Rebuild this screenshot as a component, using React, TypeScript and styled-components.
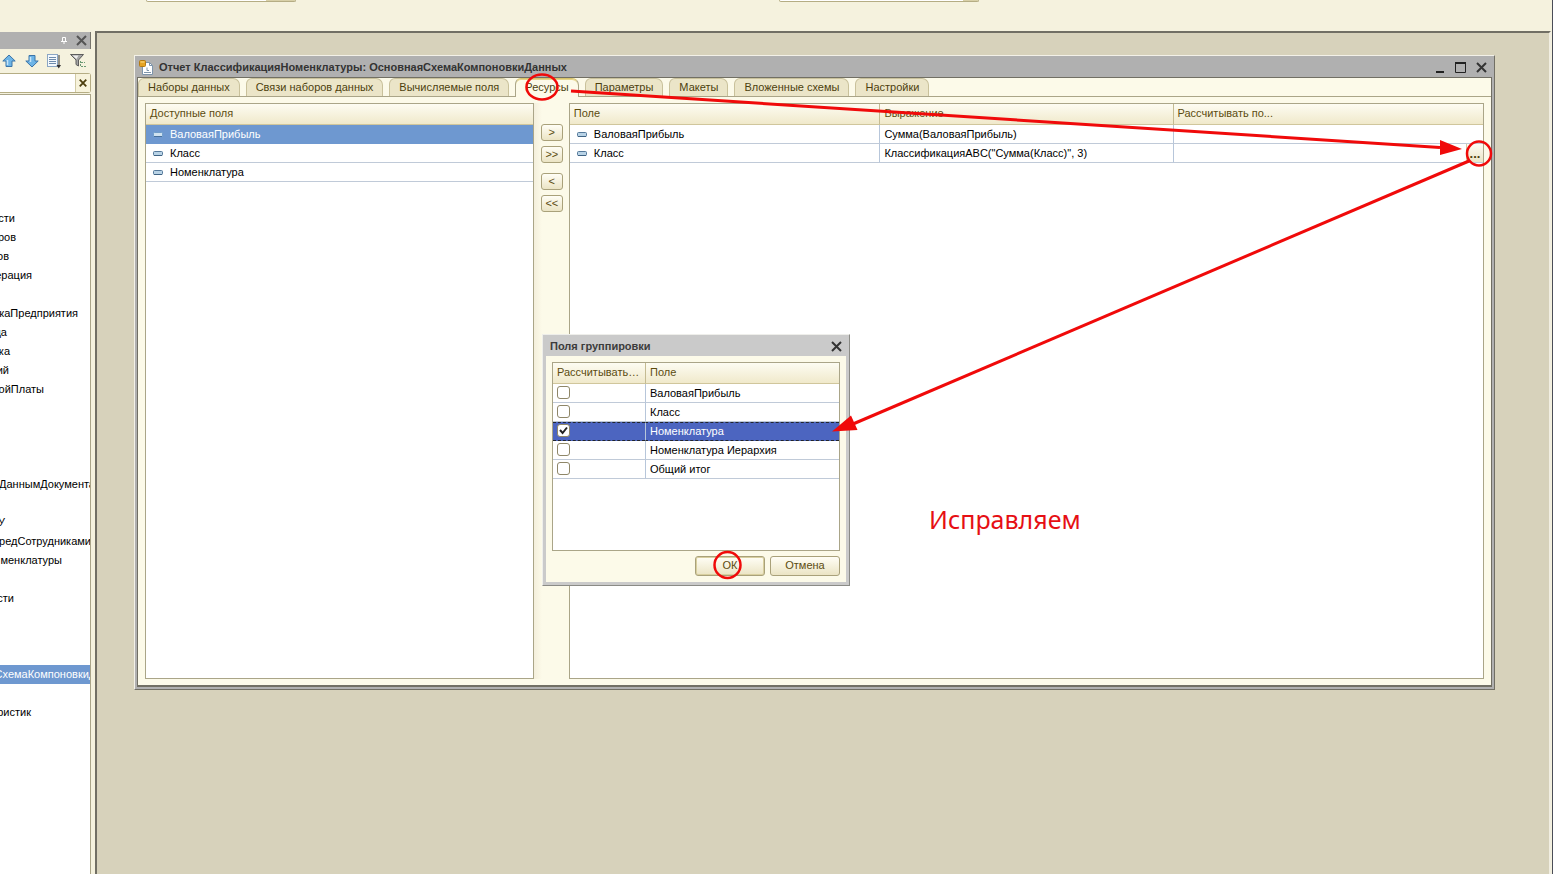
import React from "react";
import styled, { createGlobalStyle, css } from "styled-components";

const Global = createGlobalStyle`
  * { box-sizing: border-box; }
  html, body, #root { height: 100%; }
  body {
    margin: 0;
    overflow: hidden;
    background: #f5f2de;
    font: 11px/13px "Liberation Sans", Arial, sans-serif;
    color: #000;
  }
  button, input { font: inherit; margin: 0; }
`;

const Shell = styled.div`
  position: relative;
  height: 100%;
  display: flex;
  flex-direction: column;
  border-right: 1px solid #4a4d58;
`;

const TopBar = styled.header`
  flex: none;
  height: 31px;
  display: flex;
  align-items: flex-start;
  padding-left: 146px;
  gap: 483px;
  background: #f5f2de;
`;

const ComboEdge = styled.div<{ $width: number; $button: number }>`
  display: flex;
  justify-content: flex-end;
  width: ${(p) => p.$width}px;
  height: 2px;
  background: #fff;
  border: 1px solid #b5ad84;
  border-top: 0;
  border-radius: 0 0 3px 3px;
  &::after {
    content: "";
    width: ${(p) => p.$button}px;
    background: #d8d0a8;
  }
`;

const Body = styled.div`
  flex: 1;
  min-height: 0;
  display: flex;
  gap: 4px;
  padding-right: 1px;
`;

const Side = styled.aside`
  flex: none;
  width: 91px;
  padding-top: 1px;
  display: flex;
  flex-direction: column;
`;

const SideTitle = styled.div`
  flex: none;
  height: 17px;
  display: flex;
  align-items: center;
  justify-content: flex-end;
  gap: 9px;
  padding-right: 3px;
  background: #b0b0b0;
  border-right: 1px solid #77756c;
`;

const IconButton = styled.button`
  display: flex;
  align-items: center;
  justify-content: center;
  padding: 0;
  border: 0;
  background: none;
  color: #333;
  svg { display: block; }
`;

const SideTools = styled.div`
  flex: none;
  height: 24px;
  display: flex;
  align-items: center;
  justify-content: space-between;
  padding: 0 4px 0 2px;
`;

const SearchRow = styled.div`
  flex: none;
  height: 20px;
  display: flex;
  border: 1px solid #b5ad84;
  border-left: 0;
  border-radius: 0 3px 3px 0;
  background: #fff;
  ${IconButton} {
    flex: none;
    width: 15px;
    border-left: 1px solid #d2cba6;
    background: #f7f3dc;
  }
`;

const SearchInput = styled.input`
  flex: 1;
  min-width: 0;
  border: 0;
  padding: 0;
  background: #fff;
  outline: none;
`;

const Tree = styled.ul`
  flex: 1;
  min-height: 0;
  margin: 1px 0 0;
  padding: 0;
  list-style: none;
  overflow: hidden;
  background: #fff;
  border: solid #aaa588;
  border-width: 1px 1px 0 0;
`;

const TreeRow = styled.li<{ $selected?: boolean }>`
  height: 19px;
  overflow: hidden;
  background: ${(p) => (p.$selected ? "#6e98d0" : "none")};
  color: ${(p) => (p.$selected ? "#fff" : "#000")};
`;

const TreeText = styled.div<{ $end: number }>`
  width: ${(p) => p.$end}px;
  line-height: 19px;
  display: flex;
  justify-content: flex-end;
  white-space: nowrap;
`;

const Workspace = styled.main`
  position: relative;
  flex: 1;
  min-width: 0;
  background: #d7d2bb;
  border: solid #716f64;
  border-width: 2px 0 0 2px;
  border-right: 2px solid #f1eee2;
`;

const Win = styled.section`
  position: absolute;
  left: 37px;
  right: 54px;
  top: 22px;
  height: 635px;
  display: flex;
  flex-direction: column;
  padding: 0 2px 2px;
  background: #b0b0b0;
  border: 1px solid #716f64;
  border-top-color: #f3f1e8;
  border-left-color: #f3f1e8;
`;

const WinTitle = styled.header`
  flex: none;
  height: 21px;
  display: flex;
  align-items: center;
  gap: 5px;
  padding: 1px 5px 0 2px;
  color: #333;
  h1 {
    flex: 1;
    margin: 0;
    font-size: 11px;
    line-height: 13px;
  }
`;

const WinButtons = styled.div`
  display: flex;
  gap: 10px;
`;

const WinBody = styled.div`
  flex: 1;
  min-height: 0;
  display: flex;
  flex-direction: column;
  background: #fcfae9;
  border: 1px solid #716f64;
  border-bottom-width: 2px;
`;

const Tabs = styled.div`
  flex: none;
  height: 19px;
  display: flex;
  gap: 6px;
  border-bottom: 1px solid #aaa588;
`;

const Tab = styled.button<{ $active?: boolean }>`
  height: 18px;
  padding: 0 9px;
  border: 1px solid #c9c19b;
  border-bottom: 0;
  border-radius: 6px 7px 0 0;
  background: #ebe5c8;
  color: #4d3f0e;
  line-height: 17px;
  white-space: nowrap;
  ${(p) =>
    p.$active &&
    css`
      height: 19px;
      padding-bottom: 1px;
      background: #fcfae9;
      border-color: #aaa588;
      border-top-color: #d8c36a;
      box-shadow: inset 0 1px #e6d68c;
    `}
`;

const Panes = styled.div`
  flex: 1;
  min-height: 0;
  display: flex;
  padding: 6px 7px;
`;

const Frame = styled.div<{ $grow: number; $basis: number }>`
  flex: ${(p) => p.$grow} 1 ${(p) => p.$basis}px;
  min-width: 0;
  background: #fff;
  border: 1px solid #aaa588;
`;

const Grid = styled.table`
  width: 100%;
  table-layout: fixed;
  border-collapse: separate;
  border-spacing: 0;
  th {
    height: 21px;
    padding: 0 4px 2px;
    text-align: left;
    font-weight: normal;
    color: #5c4c10;
    background: linear-gradient(#fdfcf2, #f0e9cb);
    border-bottom: 1px solid #d0c69c;
    white-space: nowrap;
    overflow: hidden;
    text-overflow: ellipsis;
  }
  td {
    height: 19px;
    padding: 0 4px;
    border-bottom: 1px solid #c0cad8;
    white-space: nowrap;
  }
  th + th { border-left: 1px solid #c4bb92; }
  td + td { border-left: 1px solid #b7c6da; }
`;

const Row = styled.tr<{ $selected?: boolean; $focus?: boolean }>`
  ${(p) =>
    p.$selected &&
    css`
      td { background: #6e98d0; color: #fff; border-color: #6e98d0; }
    `}
  ${(p) =>
    p.$focus &&
    css`
      td {
        background: #4c65c0;
        color: #fff;
        border-top: 1px dashed #22262e;
        border-bottom: 1px dashed #22262e;
      }
    `}
`;

const FieldName = styled.div`
  display: flex;
  align-items: center;
  gap: 7px;
  padding-left: 3px;
`;

const EllipsisCell = styled.div`
  display: flex;
  justify-content: flex-end;
  margin-right: -4px;
`;

const EllipsisButton = styled.button`
  width: 17px;
  height: 18px;
  padding: 2px 0 0;
  border: 0;
  border-left: 1px solid #d2cba6;
  background: linear-gradient(#fdfcf4, #ece5c6);
  color: #4d3f0e;
  font-weight: bold;
  font-size: 13px;
  line-height: 16px;
`;

const Movers = styled.div`
  flex: none;
  width: 35px;
  padding: 21px 0 0 7px;
  display: flex;
  flex-direction: column;
  gap: 5px;
  background: linear-gradient(90deg, #f4efdc, #fcfae9 8px);
  button:nth-child(3) { margin-top: 5px; }
`;

const PushButton = styled.button<{ $width: number; $height: number; $main?: boolean }>`
  flex: none;
  width: ${(p) => p.$width}px;
  height: ${(p) => p.$height}px;
  padding: 0 0 1px;
  border: 1px solid #a9a17a;
  border-radius: 3px;
  background: linear-gradient(#fffef6, #ebe4c4);
  color: #5c4c10;
  ${(p) => p.$main && css`box-shadow: inset 0 0 0 1px #d8cf9f;`}
`;

const Dialog = styled.section`
  position: absolute;
  left: 445px;
  top: 301px;
  width: 308px;
  height: 252px;
  display: flex;
  flex-direction: column;
  padding: 0 3px 3px;
  background: #cacaca;
  border: 1px solid #8b8b86;
  border-top-color: #eeeeea;
  border-left-color: #eeeeea;
`;

const DialogTitle = styled.header`
  flex: none;
  height: 21px;
  display: flex;
  align-items: center;
  justify-content: space-between;
  padding: 1px 4px 0;
  color: #3c3c3c;
  h2 {
    margin: 0;
    font-size: 11px;
    line-height: 13px;
  }
`;

const DialogBody = styled.div`
  flex: 1;
  min-height: 0;
  display: flex;
  flex-direction: column;
  gap: 5px;
  padding: 6px;
  background: #fcfae9;
`;

const DialogButtons = styled.footer`
  display: flex;
  justify-content: flex-end;
  gap: 5px;
`;

const Check = styled.input`
  appearance: none;
  display: block;
  width: 13px;
  height: 13px;
  border: 1px solid #8f8768;
  border-radius: 3px;
  background: #fff;
  && { margin-bottom: 2px; }
  &:checked {
    background: #fff
      url("data:image/svg+xml,%3Csvg xmlns='http://www.w3.org/2000/svg' viewBox='0 0 11 11'%3E%3Cpath d='M2 5l2.600 3L9 2.500' fill='none' stroke='%23222' stroke-width='2'/%3E%3C/svg%3E");
  }
`;

const Marks = styled.svg`
  position: absolute;
  left: 0;
  top: 0;
  overflow: visible;
  pointer-events: none;
`;

const Caption = styled.div`
  position: absolute;
  left: 929px;
  top: 501px;
  color: #e60f14;
  font: 25px/36px "Noto Sans", "Open Sans", sans-serif;
`;

const Cross = ({ size = 11, color = "#333", weight = 2 }) => (
  <svg width={size} height={size} viewBox="0 0 11 11">
    <path d="M1 1l9 9M10 1l-9 9" stroke={color} strokeWidth={weight} fill="none" />
  </svg>
);

const FieldIcon = ({ light }: { light?: boolean }) => (
  <svg width="10" height="5" viewBox="0 0 10 5">
    <rect x=".5" y=".5" width="9" height="4" rx="1" fill={light ? "#cfe2f0" : "#b9d3e6"} stroke={light ? "#6f9cc8" : "#55799a"} />
    <path d="M1 4.500h8" stroke={light ? "#47709c" : "#3f6384"} />
  </svg>
);

const Arrow = ({ down }: { down?: boolean }) => (
  <svg width="14" height="14" viewBox="0 0 14 14">
    <path
      d={down ? "M7 13L.8 7H4V1.500H10V7H13.200Z" : "M7 1L.8 7H4V12.500H10V7H13.200Z"}
      fill="#6db4e6"
      stroke="#3b74a8"
    />
    <path d={down ? "M5.500 3v5" : "M5.500 6v5"} stroke="#c5e5f8" strokeWidth="1.500" />
  </svg>
);

const ListIcon = () => (
  <svg width="14" height="15" viewBox="0 0 14 15">
    <rect x=".5" y=".5" width="10" height="12" fill="#f4f9fd" stroke="#8ba6c4" />
    <path d="M2 3.500h7M2 5.500h7M2 7.500h7M2 9.500h7" stroke="#6d8bad" />
    <path d="M12 1v11" stroke="#333" fill="none" />
    <path d="M9.500 11h4.500l-2.250 3.500Z" fill="#333" />
  </svg>
);

const FilterIcon = () => (
  <svg width="17" height="16" viewBox="0 0 17 16">
    <path d="M.5 1.500h13L8.500 7v6L6 11.500V7Z" fill="#a5a5a5" stroke="#5d5d5d" />
    <path d="M2.500 2.500h6L6.500 6Z" fill="#eee" />
    <path d="M10.500 8v6M11 9.500h4M11 13.500h5" stroke="#6b9a74" strokeDasharray="2 1" />
  </svg>
);

const ReportIcon = () => (
  <svg width="15" height="15" viewBox="0 0 15 15">
    <path d="M3.500 2.500h7l3 3v9h-10Z" fill="#fff" stroke="#7d94ab" />
    <path d="M10.500 2.500v3h3M5 12.500h7M8 7.500v3h2" stroke="#7d94ab" fill="none" />
    <rect x=".5" y=".5" width="6" height="6" rx="1" fill="#e5a323" stroke="#b57a12" />
    <path d="M1.500 2h4" stroke="#ffe08a" />
  </svg>
);

const tree: Record<number, { text: string; end: number; selected?: boolean }> = {
  6: { text: "сти", end: 15 },
  7: { text: "ров", end: 16 },
  8: { text: "ов", end: 9 },
  9: { text: "ерация", end: 32 },
  11: { text: "каПредприятия", end: 78 },
  12: { text: "да", end: 7 },
  13: { text: "ка", end: 10 },
  14: { text: "ий", end: 9 },
  15: { text: "ойПлаты", end: 44 },
  20: { text: "ДаннымДокумента", end: 95 },
  22: { text: "У", end: 5 },
  23: { text: "редСотрудниками", end: 91 },
  24: { text: "менклатуры", end: 62 },
  26: { text: "сти", end: 14 },
  30: { text: "СхемаКомпоновкиДанных", end: 128, selected: true },
  32: { text: "ристик", end: 31 },
};

const tabs = [
  "Наборы данных",
  "Связи наборов данных",
  "Вычисляемые поля",
  "Ресурсы",
  "Параметры",
  "Макеты",
  "Вложенные схемы",
  "Настройки",
];

const available = ["ВаловаяПрибыль", "Класс", "Номенклатура"];

const resources = [
  { field: "ВаловаяПрибыль", expr: "Сумма(ВаловаяПрибыль)" },
  { field: "Класс", expr: 'КлассификацияABC("Сумма(Класс)", 3)', edit: true },
];

const groupFields = ["ВаловаяПрибыль", "Класс", "Номенклатура", "Номенклатура Иерархия", "Общий итог"];

export default function App() {
  return (
    <Shell>
      <Global />
      <TopBar>
        <ComboEdge $width={150} $button={29} />
        <ComboEdge $width={200} $button={15} />
      </TopBar>
      <Body>
        <Side>
          <SideTitle>
            <IconButton aria-label="Закрепить">
              <svg width="6" height="7" viewBox="0 0 6 7">
                <path d="M1.500 .5h3v4h-3ZM0 4.500h6M3 5v2" stroke="#fff" fill="none" />
              </svg>
            </IconButton>
            <IconButton aria-label="Закрыть панель"><Cross color="#555" /></IconButton>
          </SideTitle>
          <SideTools>
            <IconButton aria-label="Вверх"><Arrow /></IconButton>
            <IconButton aria-label="Вниз"><Arrow down /></IconButton>
            <IconButton aria-label="Сортировка"><ListIcon /></IconButton>
            <IconButton aria-label="Отбор"><FilterIcon /></IconButton>
          </SideTools>
          <SearchRow>
            <SearchInput aria-label="Поиск" />
            <IconButton aria-label="Очистить"><Cross size={8} color="#4d3f0e" weight={2.5} /></IconButton>
          </SearchRow>
          <Tree>
            {Array.from({ length: 41 }, (_, i) => {
              const item = tree[i];
              return (
                <TreeRow key={i} $selected={item?.selected}>
                  {item && <TreeText $end={item.end}>{item.text}</TreeText>}
                </TreeRow>
              );
            })}
          </Tree>
        </Side>
        <Workspace>
          <Win>
            <WinTitle>
              <ReportIcon />
              <h1>Отчет КлассификацияНоменклатуры: ОсновнаяСхемаКомпоновкиДанных</h1>
              <WinButtons>
                <IconButton aria-label="Свернуть">
                  <svg width="10" height="11" viewBox="0 0 10 11"><path d="M1 10h8" stroke="#222" strokeWidth="2" /></svg>
                </IconButton>
                <IconButton aria-label="Развернуть">
                  <svg width="11" height="11" viewBox="0 0 11 11">
                    <path d="M.5 1v9.500h10V1" stroke="#222" fill="none" />
                    <path d="M0 1h11" stroke="#222" strokeWidth="2" />
                  </svg>
                </IconButton>
                <IconButton aria-label="Закрыть"><Cross /></IconButton>
              </WinButtons>
            </WinTitle>
            <WinBody>
              <Tabs role="tablist">
                {tabs.map((t) => (
                  <Tab key={t} role="tab" aria-selected={t === "Ресурсы"} $active={t === "Ресурсы"}>{t}</Tab>
                ))}
              </Tabs>
              <Panes>
                <Frame $grow={388} $basis={0}>
                  <Grid>
                    <thead><tr><th>Доступные поля</th></tr></thead>
                    <tbody>
                      {available.map((f, i) => (
                        <Row key={f} $selected={i === 0}>
                          <td><FieldName><FieldIcon light={i === 0} />{f}</FieldName></td>
                        </Row>
                      ))}
                    </tbody>
                  </Grid>
                </Frame>
                <Movers>
                  {[">", ">>", "<", "<<"].map((m) => (
                    <PushButton key={m} $width={22} $height={17}>{m}</PushButton>
                  ))}
                </Movers>
                <Frame $grow={916} $basis={0}>
                  <Grid>
                    <colgroup>
                      <col style={{ width: "33.9%" }} />
                      <col style={{ width: "32.1%" }} />
                      <col />
                    </colgroup>
                    <thead><tr><th>Поле</th><th>Выражение</th><th>Рассчитывать по...</th></tr></thead>
                    <tbody>
                      {resources.map((r) => (
                        <Row key={r.field}>
                          <td><FieldName><FieldIcon />{r.field}</FieldName></td>
                          <td>{r.expr}</td>
                          <td>{r.edit && <EllipsisCell><EllipsisButton>...</EllipsisButton></EllipsisCell>}</td>
                        </Row>
                      ))}
                    </tbody>
                  </Grid>
                </Frame>
              </Panes>
            </WinBody>
          </Win>
          <Dialog role="dialog" aria-label="Поля группировки">
            <DialogTitle>
              <h2>Поля группировки</h2>
              <IconButton aria-label="Закрыть окно"><Cross /></IconButton>
            </DialogTitle>
            <DialogBody>
              <Frame $grow={1} $basis={0}>
                <Grid>
                  <colgroup><col style={{ width: "92px" }} /><col /></colgroup>
                  <thead><tr><th>Рассчитывать по</th><th>Поле</th></tr></thead>
                  <tbody>
                    {groupFields.map((f, i) => (
                      <Row key={f} $focus={i === 2}>
                        <td><Check type="checkbox" aria-label={f} defaultChecked={i === 2} /></td>
                        <td>{f}</td>
                      </Row>
                    ))}
                  </tbody>
                </Grid>
              </Frame>
              <DialogButtons>
                <PushButton $width={70} $height={20} $main>ОК</PushButton>
                <PushButton $width={70} $height={20}>Отмена</PushButton>
              </DialogButtons>
            </DialogBody>
          </Dialog>
        </Workspace>
      </Body>
      <Marks width="1553" height="874" viewBox="0 0 1553 874">
        <g fill="none" stroke="#f00a0a" strokeWidth="2.500">
          <ellipse cx="542" cy="87" rx="15.500" ry="12.500" />
          <circle cx="1479" cy="153.500" r="12" />
          <circle cx="727.500" cy="565" r="13" />
          <path d="M571 91L1440 147.500" strokeWidth="3" />
          <path d="M1469 161L853 424" strokeWidth="3" />
        </g>
        <path d="M1462 149L1440 140V155ZM832 431.500L851 415.500L857.500 430Z" fill="#f00a0a" />
      </Marks>
      <Caption>Исправляем</Caption>
    </Shell>
  );
}
